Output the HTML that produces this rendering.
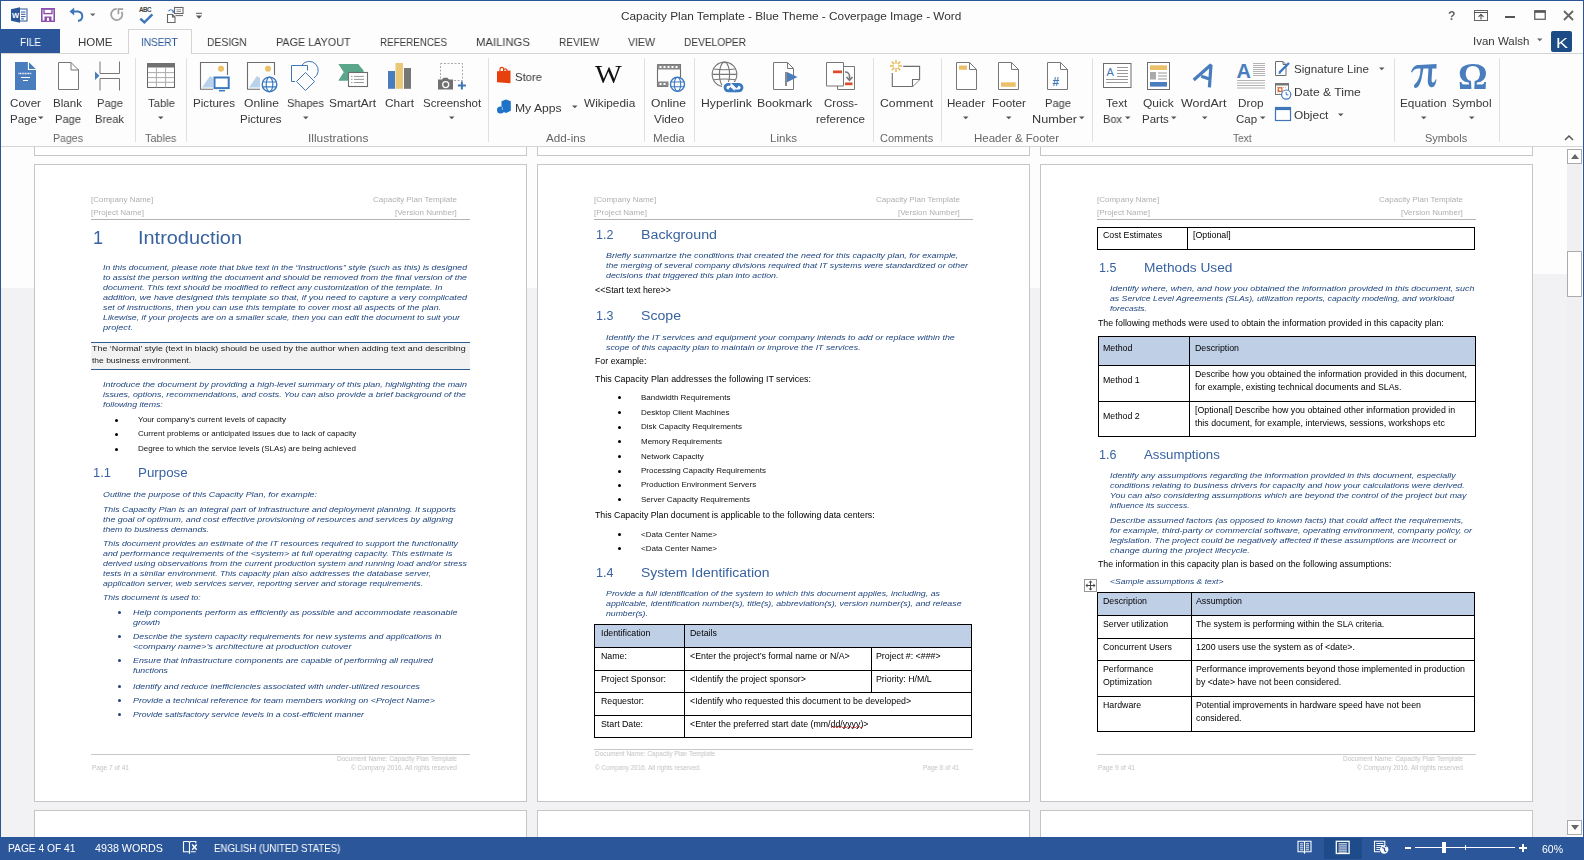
<!DOCTYPE html>
<html><head><meta charset="utf-8"><style>
html,body{margin:0;padding:0;}
body{width:1584px;height:860px;position:relative;overflow:hidden;background:#fcfdfc;font-family:'Liberation Sans', sans-serif;}
.t{position:absolute;white-space:pre;transform-origin:0 0;-webkit-font-smoothing:antialiased;will-change:transform;}
svg{position:absolute;overflow:visible;}
</style></head><body>
<div style="position:absolute;left:0px;top:0px;width:1584px;height:860px;background:#fcfdfc"></div><div style="position:absolute;left:1px;top:288px;width:1566px;height:549px;background:#f2f2f4"></div><div style="position:absolute;left:1533px;top:274px;width:34px;height:14px;background:#f2f2f4"></div><div style="position:absolute;left:0px;top:0px;width:1584px;height:1px;background:#2b579a"></div><div style="position:absolute;left:0px;top:0px;width:1px;height:860px;background:#2b579a"></div><div style="position:absolute;left:1583px;top:0px;width:1px;height:860px;background:#2b579a"></div><div style="position:absolute;left:1px;top:29px;width:59px;height:25px;background:#2b579a"></div><div style="position:absolute;left:1px;top:53px;width:1582px;height:1px;background:#d4d4d4"></div><div style="position:absolute;left:128px;top:29px;width:64px;height:25px;background:#fcfdfc;border:1px solid #d4d4d4;border-bottom:none;box-sizing:border-box"></div><div style="position:absolute;left:1px;top:146px;width:1582px;height:1px;background:#d4d4d4"></div><div style="position:absolute;left:0px;top:837px;width:1584px;height:23px;background:#2b579a"></div><div style="position:absolute;left:1324px;top:838px;width:38px;height:21px;background:#1e4b8a"></div><div style="position:absolute;left:34px;top:140px;width:493px;height:16px;background:#fff;border:1px solid #c6c6c6;border-top:none;box-sizing:border-box"></div><div style="position:absolute;left:34px;top:164px;width:493px;height:638px;background:#fff;border:1px solid #c6c6c6;box-sizing:border-box"></div><div style="position:absolute;left:34px;top:810px;width:493px;height:40px;background:#fff;border:1px solid #c6c6c6;border-bottom:none;box-sizing:border-box"></div><div style="position:absolute;left:537px;top:140px;width:493px;height:16px;background:#fff;border:1px solid #c6c6c6;border-top:none;box-sizing:border-box"></div><div style="position:absolute;left:537px;top:164px;width:493px;height:638px;background:#fff;border:1px solid #c6c6c6;box-sizing:border-box"></div><div style="position:absolute;left:537px;top:810px;width:493px;height:40px;background:#fff;border:1px solid #c6c6c6;border-bottom:none;box-sizing:border-box"></div><div style="position:absolute;left:1040px;top:140px;width:493px;height:16px;background:#fff;border:1px solid #c6c6c6;border-top:none;box-sizing:border-box"></div><div style="position:absolute;left:1040px;top:164px;width:493px;height:638px;background:#fff;border:1px solid #c6c6c6;box-sizing:border-box"></div><div style="position:absolute;left:1040px;top:810px;width:493px;height:40px;background:#fff;border:1px solid #c6c6c6;border-bottom:none;box-sizing:border-box"></div><div style="position:absolute;left:1px;top:54px;width:1582px;height:92px;background:#fcfdfc"></div><div style="position:absolute;left:1px;top:146px;width:1582px;height:1px;background:#d4d4d4"></div><div style="position:absolute;left:0px;top:837px;width:1584px;height:23px;background:#2b579a"></div><div style="position:absolute;left:1324px;top:838px;width:38px;height:21px;background:#1e4b8a"></div><div style="position:absolute;left:1567px;top:147px;width:16px;height:690px;background:#fcfdfc"></div><div style="position:absolute;left:1567px;top:164px;width:15px;height:657px;background:#f0f0f2"></div><div style="position:absolute;left:1567px;top:149px;width:15px;height:15px;background:#fff;border:1px solid #ababab;box-sizing:border-box"></div><div style="position:absolute;left:1567px;top:251px;width:15px;height:46px;background:#fff;border:1px solid #ababab;box-sizing:border-box"></div><div style="position:absolute;left:1567px;top:820px;width:15px;height:15px;background:#fff;border:1px solid #ababab;box-sizing:border-box"></div><svg style="left:1571px;top:154px" width="8" height="5"><path d="M0 5 L4 0 L8 5Z" fill="#666"/></svg><svg style="left:1571px;top:825px" width="8" height="5"><path d="M0 0 L4 5 L8 0Z" fill="#666"/></svg><div style="position:absolute;left:1583px;top:0px;width:1px;height:837px;background:#2b579a"></div><div style="position:absolute;left:0px;top:0px;width:1px;height:837px;background:#2b579a"></div><svg style="left:11px;top:7px" width="17" height="16" viewBox="0 0 17 16"><path d="M0 2.2 L9 0.3 V15.7 L0 13.8Z" fill="#2b579a"/><rect x="8.5" y="2" width="7.5" height="12" fill="#fff" stroke="#2b579a" stroke-width="1"/><path d="M10 5h4.5M10 7.3h4.5M10 9.6h4.5M10 11.9h3" stroke="#2b579a" stroke-width="1"/><text x="1" y="11" font-family="Liberation Sans" font-size="7.5" font-weight="bold" fill="#fff">W</text></svg><svg style="left:41px;top:8px" width="14" height="14" viewBox="0 0 14 14"><path d="M0.8 0.8h12.4v12.4H0.8z" fill="none" stroke="#8c4fb0" stroke-width="1.6"/><rect x="3" y="1" width="8" height="4.6" fill="none" stroke="#8c4fb0" stroke-width="1.4"/><rect x="3.5" y="8.5" width="7" height="4.5" fill="#8c4fb0"/><rect x="6" y="9.8" width="2" height="3.2" fill="#fff"/></svg><svg style="left:69px;top:7px" width="16" height="15" viewBox="0 0 16 15"><path d="M4 4.5 H9 A5 4.8 0 0 1 9 14" fill="none" stroke="#3f76b8" stroke-width="2"/><path d="M0.5 4.5 L5.2 0.6 V8.4Z" fill="#3f76b8"/></svg><svg style="left:89.5px;top:12.5px" width="6" height="4" viewBox="0 0 6 4"><path d="M0 0.5h5.5L2.75 3.3z" fill="#666"/></svg><svg style="left:109px;top:6px" width="16" height="17" viewBox="0 0 16 17"><path d="M7.7 2.9 A5.6 5.6 0 1 0 12.55 5.7" fill="none" stroke="#a0a0a0" stroke-width="1.7"/><path d="M9.4 8.2 V3.1 H14.2" fill="none" stroke="#a0a0a0" stroke-width="1.7"/></svg><svg style="left:138px;top:5px" width="16" height="19" viewBox="0 0 16 19"><text x="1" y="6.8" font-family="Liberation Sans" font-size="6.3" font-weight="bold" fill="#444" textLength="12.5">ABC</text><path d="M2.3 13.6 L6.4 17.4 L14.4 9.4" fill="none" stroke="#3f76b8" stroke-width="2.4"/></svg><svg style="left:166px;top:6px" width="18" height="18" viewBox="0 0 18 18"><path d="M1.5 8.5 H6.5 L9 11 V16.5 H1.5Z M6.5 8.5 V11 H9" fill="#fff" stroke="#666" stroke-width="1.1"/><rect x="8.5" y="1.5" width="8.5" height="6" fill="#fff" stroke="#666" stroke-width="1.1"/><path d="M10.5 3.8h4.5M10.5 5.5h4.5" stroke="#888" stroke-width="0.9"/><path d="M9.5 9.6h7.5" stroke="#666" stroke-width="1"/><path d="M2.5 5.2 Q4.8 2.3 7.3 5.3" fill="none" stroke="#3a78c0" stroke-width="1.2"/><path d="M5.8 6.3 L8.3 6.9 L8.1 4.2Z" fill="#3a78c0"/></svg><svg style="left:195px;top:12px" width="8" height="8" viewBox="0 0 8 8"><path d="M1 1.3h6" stroke="#555" stroke-width="1"/><path d="M1 3.5h6L4 6.7z" fill="#555"/></svg><svg style="left:1474px;top:10px" width="14" height="11" viewBox="0 0 14 11"><rect x="0.5" y="0.5" width="13" height="10" fill="none" stroke="#666" stroke-width="1"/><path d="M0.5 2.5h13" stroke="#555" stroke-width="1"/><path d="M7 9.5V4.5M4.5 6.8L7 4.3 9.5 6.8" fill="none" stroke="#555" stroke-width="1.1"/></svg><div style="position:absolute;left:1504.5px;top:16px;width:10px;height:2px;background:#555"></div><svg style="left:1534px;top:10px" width="12" height="10" viewBox="0 0 12 10"><rect x="0.75" y="0.75" width="10.5" height="8.5" fill="none" stroke="#555" stroke-width="1.2"/><path d="M0.5 1.8h11" stroke="#555" stroke-width="2"/></svg><svg style="left:1562.5px;top:9.5px" width="11" height="11" viewBox="0 0 11 11"><path d="M1 1L10 10M10 1L1 10" stroke="#666" stroke-width="1.8"/></svg><svg style="left:1537px;top:38.3px" width="6" height="4" viewBox="0 0 6 4"><path d="M0 0.5h5.5L2.75 3.3z" fill="#666"/></svg><div style="position:absolute;left:1551px;top:31px;width:21px;height:21px;background:#1d4b86;border-radius:2px"></div><svg style="left:1564px;top:134px" width="10" height="7" viewBox="0 0 10 7"><path d="M1 6 L5 2 L9 6" fill="none" stroke="#555" stroke-width="1.5"/></svg><svg style="left:15px;top:62px" width="22" height="28" viewBox="0 0 22 28"><path d="M0 0 H13.5 L21 7.5 V28 H0Z" fill="#4a7dbd"/><path d="M13.5 0 V7.5 H21" fill="none" stroke="#fff" stroke-width="1.2"/><path d="M14 0.5 L20.5 7 H14Z" fill="#4a7dbd"/><path d="M3.5 11.5h13" stroke="#fff" stroke-width="1.6" stroke-dasharray="1 0.6"/><path d="M6 15.5h9M8 18.5h5" stroke="#fff" stroke-width="1.2"/></svg><svg style="left:58px;top:62px" width="22" height="28" viewBox="0 0 22 28"><path d="M0.5 0.5 H13 L20.5 8 V27.5 H0.5Z M13 0.5 V8 H20.5" fill="#fff" stroke="#777" stroke-width="1"/></svg><svg style="left:94px;top:61px" width="27" height="30" viewBox="0 0 27 30"><path d="M6 0.5 V12.5 H25.5 V0.5 M6 29.5 V17.5 H25.5 V29.5" fill="none" stroke="#777" stroke-width="1"/><path d="M1 10.5 L5.5 14.8 L1 19z" fill="#4a7dbd"/></svg><svg style="left:37.5px;top:116px" width="6" height="4" viewBox="0 0 6 4"><path d="M0 0.5h5.5L2.75 3.3z" fill="#555"/></svg><div style="position:absolute;left:135px;top:58px;width:1px;height:84px;background:#e0e0e2"></div><svg style="left:147px;top:63px" width="28" height="25" viewBox="0 0 28 25"><rect x="0.5" y="0.5" width="27" height="24" fill="#fff" stroke="#666" stroke-width="1"/><rect x="0" y="0" width="28" height="4.5" fill="#707070"/><path d="M1 9.6h26M1 14.6h26M1 19.3h26M9.4 4.5v20M18.6 4.5v20" stroke="#aaa" stroke-width="1"/></svg><svg style="left:157.5px;top:116px" width="6" height="4" viewBox="0 0 6 4"><path d="M0 0.5h5.5L2.75 3.3z" fill="#555"/></svg><div style="position:absolute;left:186px;top:58px;width:1px;height:84px;background:#e0e0e2"></div><svg style="left:200px;top:62px" width="30" height="30" viewBox="0 0 30 30"><path d="M13 27.3 H0.5 V0.5 H27.5 V13" fill="none" stroke="#6d6d6d" stroke-width="1.1"/><circle cx="21" cy="6.8" r="3" fill="#ecc06a"/><path d="M2 25.5 L10 14 L13 16 V25.5Z" fill="#b8d2ec"/></svg><svg style="left:213px;top:76px" width="18" height="17" viewBox="0 0 18 17"><rect x="1.5" y="1.5" width="14.2" height="10.6" fill="#fff" stroke="#3a78c0" stroke-width="2"/><path d="M6 14.7h6" stroke="#3a78c0" stroke-width="1.5"/></svg><svg style="left:247px;top:62px" width="30" height="30" viewBox="0 0 30 30"><path d="M13 27.3 H0.5 V0.5 H27.5 V13" fill="none" stroke="#6d6d6d" stroke-width="1.1"/><circle cx="21" cy="6.8" r="3" fill="#ecc06a"/><path d="M2 25.5 L10 14 L13 16 V25.5Z" fill="#b8d2ec"/></svg><svg style="left:261px;top:76px" width="17" height="17" viewBox="0 0 17 17"><circle cx="8.5" cy="8.4" r="7.3" fill="#fff" stroke="#3a78c0" stroke-width="1.4"/><ellipse cx="8.5" cy="8.4" rx="3.3" ry="7.3" fill="none" stroke="#3a78c0" stroke-width="1.2"/><path d="M1.5 6h14M1.5 10.8h14" stroke="#3a78c0" stroke-width="1.2"/></svg><svg style="left:290px;top:60px" width="32" height="33" viewBox="0 0 32 33"><path d="M5 21.5 H1.5 V5.5 H17.5 V10.5" fill="none" stroke="#3f76b8" stroke-width="1"/><path d="M12 5 A9 9 0 1 1 24 18" fill="none" stroke="#3f76b8" stroke-width="1"/><path d="M15.5 12.5 L24.5 21.5 L15.5 30.5 L6.5 21.5Z" fill="none" stroke="#3f76b8" stroke-width="1"/></svg><svg style="left:338px;top:63px" width="31" height="25" viewBox="0 0 31 25"><path d="M0.5 1 H20 L25.5 7.5 V9 H10 L5.5 9.5 L0.5 17.5 H9.5 V17 L6 9.5Z" fill="#5aa68b"/><path d="M0.5 1 H20 L25.5 8 L20 17.5 H0.5 L6.5 9.2Z" fill="#5aa68b"/><rect x="10.5" y="9.5" width="19" height="14" fill="#fff" stroke="#6d6d6d" stroke-width="1.1"/><path d="M13 13.4h1.5M16 13.4h10M13 16.4h1.5M16 16.4h10M13 19.5h1.5M16 19.5h10" stroke="#999" stroke-width="1"/></svg><svg style="left:388px;top:63px" width="24" height="26" viewBox="0 0 24 26"><rect x="0" y="8" width="7" height="17.8" fill="#4a7dbd"/><rect x="7.5" y="0" width="7.5" height="25.8" fill="#eac878"/><rect x="16" y="5" width="7" height="20.8" fill="#767676"/></svg><svg style="left:437px;top:62px" width="30" height="29" viewBox="0 0 30 29"><rect x="3.5" y="1.5" width="22" height="17" fill="none" stroke="#aaa" stroke-width="1" stroke-dasharray="2 1.5"/><path d="M1 17.5 h4 l1.5 -1.7 h4 l1.5 1.7 h4 v10 h-15z" fill="#707070"/><circle cx="8.7" cy="22.6" r="3" fill="none" stroke="#fff" stroke-width="1.3"/><path d="M24.9 19.5v8M20.9 23.5h8" stroke="#3f76b8" stroke-width="2"/></svg><svg style="left:302.5px;top:116px" width="6" height="4" viewBox="0 0 6 4"><path d="M0 0.5h5.5L2.75 3.3z" fill="#555"/></svg><svg style="left:449px;top:116px" width="6" height="4" viewBox="0 0 6 4"><path d="M0 0.5h5.5L2.75 3.3z" fill="#555"/></svg><div style="position:absolute;left:488px;top:58px;width:1px;height:84px;background:#e0e0e2"></div><svg style="left:496px;top:67px" width="16" height="17" viewBox="0 0 16 17"><path d="M1 4.2 L14.5 3.6 V16.2 L1 15.2Z" fill="#e8400c"/><path d="M4 4.2 V2.2 A1.8 1.8 0 0 1 7.6 2.2 V4 M7.6 3 A1.8 1.8 0 0 1 11 3 V4" fill="none" stroke="#e8400c" stroke-width="1.2"/></svg><svg style="left:496px;top:99px" width="16" height="16" viewBox="0 0 16 16"><path d="M5.5 2.2 L10 0.5 L14.8 2.2 V11.8 L10 14 L5.5 12Z" fill="#1e72c8"/><circle cx="4.6" cy="11" r="3.6" fill="#1e72c8"/><path d="M6.3 8 v3" stroke="#fff" stroke-width="0.5"/></svg><svg style="left:571.5px;top:105.2px" width="6" height="4" viewBox="0 0 6 4"><path d="M0 0.5h5.5L2.75 3.3z" fill="#555"/></svg><div class="t" style="left:595px;top:62px;font-family:'Liberation Serif',serif;font-size:25px;line-height:25px;color:#111;transform:scaleX(1.13)">W</div><div style="position:absolute;left:643.5px;top:58px;width:1px;height:84px;background:#e0e0e2"></div><svg style="left:656px;top:63px" width="30" height="30" viewBox="0 0 30 30"><path d="M1.5 1.5 H24.5 V14 M12 23.5 H1.5 V1.5" fill="none" stroke="#6d6d6d" stroke-width="1.1"/><rect x="1.5" y="1.5" width="23" height="5" fill="#888"/><rect x="1.5" y="18.5" width="11" height="5" fill="#888"/><path d="M3.5 4h2M7.5 4h2M11.5 4h2M15.5 4h2M19.5 4h2M3.5 21h2M7.5 21h2" stroke="#fff" stroke-width="2"/><circle cx="21.5" cy="21.3" r="7" fill="#fff" stroke="#3a78c0" stroke-width="1.4"/><ellipse cx="21.5" cy="21.3" rx="3.2" ry="7" fill="none" stroke="#3a78c0" stroke-width="1.1"/><path d="M14.5 19h14M14.5 23.7h14" stroke="#3a78c0" stroke-width="1.1"/></svg><div style="position:absolute;left:694px;top:58px;width:1px;height:84px;background:#e0e0e2"></div><svg style="left:705px;top:58px" width="45" height="38" viewBox="0 0 45 38"><circle cx="19.5" cy="16.4" r="12.3" fill="none" stroke="#777" stroke-width="1.1"/><ellipse cx="19.5" cy="16.4" rx="5.1" ry="12.3" fill="none" stroke="#777" stroke-width="1.1"/><path d="M8.5 11 Q19.5 12.5 30.5 11 M7.2 16.4 H31.8 M8.5 21.8 Q19.5 20.3 30.5 21.8" fill="none" stroke="#777" stroke-width="1.1"/><path d="M17 27 L22 24 H38 V37 H17Z" fill="#fcfdfc"/><path d="M25.5 26.3 H23.3 A3.3 3.3 0 0 0 23.3 32.9 H27.5 L24.5 30" fill="none" stroke="#3a78c0" stroke-width="2.8"/><path d="M29.5 32.9 H33.7 A3.3 3.3 0 0 0 33.7 26.3 H29.5 L32.5 29.2" fill="none" stroke="#3a78c0" stroke-width="2.8"/></svg><svg style="left:772px;top:61px" width="27" height="30" viewBox="0 0 27 30"><path d="M1.5 1.5 H15.5 L21.5 7.5 V28.5 H1.5Z M15.5 1.5 V7.5 H21.5" fill="#fff" stroke="#777" stroke-width="1"/><path d="M14 11 V25" stroke="#666" stroke-width="1.5"/><path d="M15 11 L25.5 16 L15 21.3Z" fill="#4a7dbd"/></svg><svg style="left:825px;top:61px" width="32" height="30" viewBox="0 0 32 30"><path d="M12.5 5.5 H29.5 V28.5 H12.5Z" fill="#fff" stroke="#777" stroke-width="1"/><path d="M1.5 1.5 H18.5 V25 H1.5Z" fill="#fff" stroke="#777" stroke-width="1"/><rect x="8" y="9.5" width="9" height="2.7" fill="#dd4b2a"/><rect x="20" y="21.5" width="7.5" height="2.7" fill="#dd4b2a"/><path d="M20 11 A4 4 0 0 1 24.5 15 V18" fill="none" stroke="#777" stroke-width="1.6"/><path d="M21.5 16 L24.5 19.3 L27.5 16" fill="none" stroke="#777" stroke-width="1.6"/></svg><div style="position:absolute;left:872.5px;top:58px;width:1px;height:84px;background:#e0e0e2"></div><svg style="left:885px;top:58px" width="40" height="34" viewBox="0 0 40 34"><path d="M7.3 15 V28.5 H27.5 L34.6 21.5 V8.4 H18.2" fill="#fff" stroke="#6d6d6d" stroke-width="1.1"/><path d="M27.5 28.5 V21.5 H34.6" fill="#fff" stroke="#6d6d6d" stroke-width="1.1"/><g stroke="#ecc06a" stroke-width="1.7"><path d="M11 1.9v12M5 7.9h12M6.8 3.7l8.4 8.4M15.2 3.7l-8.4 8.4"/></g><circle cx="11" cy="7.9" r="2.4" fill="#fff"/></svg><div style="position:absolute;left:940.5px;top:58px;width:1px;height:84px;background:#e0e0e2"></div><svg style="left:956px;top:62px" width="22" height="28" viewBox="0 0 22 28"><path d="M0.5 0.5 H13.5 L20.5 7.5 V27.5 H0.5Z M13.5 0.5 V7.5 H20.5" fill="#fff" stroke="#777" stroke-width="1"/><rect x="3" y="3.5" width="8" height="4.3" fill="#ecc06a"/></svg><svg style="left:998px;top:62px" width="22" height="28" viewBox="0 0 22 28"><path d="M0.5 0.5 H13.5 L20.5 7.5 V27.5 H0.5Z M13.5 0.5 V7.5 H20.5" fill="#fff" stroke="#777" stroke-width="1"/><rect x="3" y="20.3" width="14.7" height="4.5" fill="#ecc06a"/></svg><svg style="left:1047px;top:62px" width="22" height="28" viewBox="0 0 22 28"><path d="M0.5 0.5 H13.5 L20.5 7.5 V27.5 H0.5Z M13.5 0.5 V7.5 H20.5" fill="#fff" stroke="#777" stroke-width="1"/><text x="5.2" y="23.5" font-family="Liberation Sans" font-size="12" font-weight="bold" font-style="italic" fill="#3f76b8">#</text></svg><svg style="left:963px;top:116px" width="6" height="4" viewBox="0 0 6 4"><path d="M0 0.5h5.5L2.75 3.3z" fill="#555"/></svg><svg style="left:1005.5px;top:116px" width="6" height="4" viewBox="0 0 6 4"><path d="M0 0.5h5.5L2.75 3.3z" fill="#555"/></svg><svg style="left:1078.5px;top:116px" width="6" height="4" viewBox="0 0 6 4"><path d="M0 0.5h5.5L2.75 3.3z" fill="#555"/></svg><div style="position:absolute;left:1091.5px;top:58px;width:1px;height:84px;background:#e0e0e2"></div><svg style="left:1103px;top:63px" width="29" height="25" viewBox="0 0 29 25"><rect x="0.5" y="0.5" width="27.5" height="24" fill="#fff" stroke="#6d6d6d" stroke-width="1"/><text x="3.5" y="12.5" font-family="Liberation Sans" font-size="11" fill="#3f76b8">A</text><path d="M14 4.5h11M14 7.5h11M14 10.5h11M14 13.5h11M3 16.5h22M3 19.5h22" stroke="#999" stroke-width="1"/></svg><svg style="left:1147px;top:62px" width="23" height="28" viewBox="0 0 23 28"><rect x="0.5" y="0.5" width="22" height="27" fill="#fff" stroke="#6d6d6d" stroke-width="1"/><rect x="3" y="3.3" width="17" height="4.7" fill="#ecc06a"/><rect x="3" y="10" width="6" height="7.5" fill="#aaa"/><path d="M11 11h9M11 14h9M11 17h9" stroke="#999" stroke-width="1"/><rect x="3" y="20" width="17" height="4.6" fill="#4a7dbd"/></svg><svg style="left:1185px;top:58px" width="35" height="35" viewBox="0 0 35 35"><path d="M8.7 22 L26 6.8 L24.4 29.3 M16.3 18.3 L25.2 21.2" fill="none" stroke="#4a7dbd" stroke-width="3.2" stroke-linejoin="bevel"/></svg><svg style="left:1237px;top:62px" width="29" height="28" viewBox="0 0 29 28"><text x="-0.5" y="15.8" font-family="Liberation Sans" font-size="20" font-weight="bold" fill="#4a7dbd">A</text><path d="M16 1.5h12M16 3.5h12M16 5.5h12M16 7.5h12M16 9.5h12M16 11.5h12M16 13.5h12M0 18.5h28M0 21h28M0 23.5h28M0 26h28" stroke="#aaa" stroke-width="0.9"/></svg><svg style="left:1124.5px;top:116px" width="6" height="4" viewBox="0 0 6 4"><path d="M0 0.5h5.5L2.75 3.3z" fill="#555"/></svg><svg style="left:1170.5px;top:116px" width="6" height="4" viewBox="0 0 6 4"><path d="M0 0.5h5.5L2.75 3.3z" fill="#555"/></svg><svg style="left:1201.5px;top:116px" width="6" height="4" viewBox="0 0 6 4"><path d="M0 0.5h5.5L2.75 3.3z" fill="#555"/></svg><svg style="left:1259.5px;top:116px" width="6" height="4" viewBox="0 0 6 4"><path d="M0 0.5h5.5L2.75 3.3z" fill="#555"/></svg><svg style="left:1274px;top:60px" width="18" height="17" viewBox="0 0 18 17"><path d="M1.5 1.5 H9 L12 4.5 V15.5 H1.5Z M9 1.5 V4.5 H12" fill="#fff" stroke="#6d6d6d" stroke-width="1"/><path d="M5.5 12.5 L15 3" stroke="#3a78c0" stroke-width="2.4"/><path d="M4.5 14 L5 11.5 L7 13.5Z" fill="#3a78c0"/></svg><svg style="left:1378.5px;top:66.7px" width="6" height="4" viewBox="0 0 6 4"><path d="M0 0.5h5.5L2.75 3.3z" fill="#555"/></svg><svg style="left:1274px;top:82px" width="18" height="18" viewBox="0 0 18 18"><rect x="1.5" y="1.5" width="13" height="11" fill="#fff" stroke="#777" stroke-width="1"/><path d="M1.5 2.5h13" stroke="#777" stroke-width="2"/><path d="M3 5.5h10M3 8.5h3M3 11h3" stroke="#bbb" stroke-width="0.9" stroke-dasharray="1 1"/><rect x="4.3" y="5.8" width="3.6" height="3.6" fill="none" stroke="#e8601c" stroke-width="1.2"/><circle cx="12.2" cy="12.6" r="4.6" fill="#fff" stroke="#3a78c0" stroke-width="1.2"/><path d="M12.2 10v2.8h2.2" fill="none" stroke="#3a78c0" stroke-width="1"/></svg><svg style="left:1274px;top:106px" width="18" height="16" viewBox="0 0 18 16"><rect x="1.5" y="1.5" width="15" height="13" fill="#fff" stroke="#3f76b8" stroke-width="1.2"/><path d="M1.5 2.8h15" stroke="#3f76b8" stroke-width="2.6"/></svg><svg style="left:1338px;top:112.7px" width="6" height="4" viewBox="0 0 6 4"><path d="M0 0.5h5.5L2.75 3.3z" fill="#555"/></svg><div style="position:absolute;left:1393.5px;top:58px;width:1px;height:84px;background:#e0e0e2"></div><svg style="left:1409px;top:62px" width="30" height="28" viewBox="0 0 30 28"><path d="M2 10 C3.5 5.5 6 3 9.5 3 L27.5 2 L27.5 6.5 L9.5 6.5 C6.5 6.5 4.5 8 3 10.5Z" fill="#4a7dbd"/><path d="M11.5 6 C11.5 14 9.5 18.5 6 22 C4 24.5 5 26.5 7.5 25.8 C10 25 12 20 13 14 L14.5 6Z" fill="#4a7dbd"/><path d="M19.5 6 L18.8 18 C18.5 24.5 22 26.5 24.8 24.5 C26.5 23 27 20.5 27.5 17.5 L26.5 17.5 C26 19.5 25 20.8 23.6 20.5 C22.3 20.2 22.6 17 22.8 14 L23.3 6Z" fill="#4a7dbd"/></svg><div class="t" style="left:1458px;top:58px;font-family:'Liberation Serif',serif;font-size:37px;line-height:37px;font-weight:bold;color:#4a7dbd">Ω</div><svg style="left:1420.5px;top:116px" width="6" height="4" viewBox="0 0 6 4"><path d="M0 0.5h5.5L2.75 3.3z" fill="#555"/></svg><svg style="left:1469px;top:116px" width="6" height="4" viewBox="0 0 6 4"><path d="M0 0.5h5.5L2.75 3.3z" fill="#555"/></svg><div style="position:absolute;left:1499px;top:58px;width:1px;height:84px;background:#e0e0e2"></div><svg style="left:182px;top:840px" width="17" height="16" viewBox="0 0 17 16"><path d="M1.5 1.5 H6.5 L7.5 2.5 L8.5 1.5 H13.8 V3.2 M1.5 1.5 V11.7 H6.5 L7.5 12.7 M7.5 2.5 V13.8 M8.7 11.7 H13.8" fill="none" stroke="#fff" stroke-width="1.1"/><path d="M10.2 4.5 L14.7 9.7 M14.7 4.5 L10.2 9.7" stroke="#fff" stroke-width="1.5"/></svg><svg style="left:1297px;top:840px" width="16" height="16" viewBox="0 0 16 16"><path d="M1 1.3 H6.8 L7.5 2 L8.2 1.3 H14 V11.8 H8.2 L7.5 12.8 L6.8 11.8 H1Z" fill="none" stroke="#fff" stroke-width="1.1"/><path d="M7.5 2 V13.5" stroke="#fff" stroke-width="1"/><path d="M3 3.8h3.2M3 5.8h3.2M3 7.8h3.2M3 9.8h3.2M8.8 3.8h3.2M8.8 5.8h3.2M8.8 7.8h3.2M8.8 9.8h3.2" stroke="#fff" stroke-width="0.9"/></svg><svg style="left:1335px;top:840px" width="16" height="15" viewBox="0 0 16 15"><rect x="1.3" y="1.3" width="12.8" height="12.2" fill="none" stroke="#fff" stroke-width="1.3"/><path d="M3.5 3.8h8.4M3.5 5.9h8.4M3.5 8h8.4M3.5 10.1h8.4M3.5 12.1h8.4" stroke="#fff" stroke-width="1"/></svg><svg style="left:1373px;top:840px" width="17" height="16" viewBox="0 0 17 16"><path d="M11.8 6 V1.3 H1.5 V11.8 H7" fill="none" stroke="#fff" stroke-width="1.1"/><path d="M3.3 3.5h7M3.3 5.5h7M3.3 7.5h4M3.3 9.5h3.5" stroke="#fff" stroke-width="0.9"/><circle cx="11.2" cy="9.5" r="4.2" fill="#fff"/><path d="M9 7.5 l2.5 1 v2 l1.5 1.5 M12 6 l1.5 1" stroke="#2b579a" stroke-width="1.2" fill="none"/></svg><div style="position:absolute;left:1405px;top:847px;width:6px;height:2px;background:#fff"></div><div style="position:absolute;left:1415px;top:847px;width:100px;height:1px;background:#fff"></div><div style="position:absolute;left:1442px;top:842px;width:4px;height:11px;background:#fff"></div><div style="position:absolute;left:1465px;top:845px;width:1px;height:5px;background:#fff"></div><div style="position:absolute;left:1519px;top:847px;width:8px;height:2px;background:#fff"></div><div style="position:absolute;left:1522px;top:844px;width:2px;height:8px;background:#fff"></div><div style="position:absolute;left:91px;top:219px;width:379px;height:1px;background:#b4b4b8"></div><div style="position:absolute;left:594px;top:219px;width:379px;height:1px;background:#b4b4b8"></div><div style="position:absolute;left:1097px;top:219px;width:379px;height:1px;background:#b4b4b8"></div><div style="position:absolute;left:91px;top:342px;width:379px;height:28px;background:#f2f2f2;border-top:1px solid #2e5c94;border-bottom:1px solid #2e5c94;box-sizing:border-box"></div><div style="position:absolute;left:115.3px;top:418.9px;width:3.1px;height:3.1px;background:#000;border-radius:50%"></div><div style="position:absolute;left:115.3px;top:432.7px;width:3.1px;height:3.1px;background:#000;border-radius:50%"></div><div style="position:absolute;left:115.3px;top:447.9px;width:3.1px;height:3.1px;background:#000;border-radius:50%"></div><div style="position:absolute;left:118.3px;top:610.9000000000001px;width:3.1px;height:3.1px;background:#1d447e;border-radius:50%"></div><div style="position:absolute;left:118.3px;top:635.4000000000001px;width:3.1px;height:3.1px;background:#1d447e;border-radius:50%"></div><div style="position:absolute;left:118.3px;top:659.4000000000001px;width:3.1px;height:3.1px;background:#1d447e;border-radius:50%"></div><div style="position:absolute;left:118.3px;top:684.7px;width:3.1px;height:3.1px;background:#1d447e;border-radius:50%"></div><div style="position:absolute;left:118.3px;top:699.2px;width:3.1px;height:3.1px;background:#1d447e;border-radius:50%"></div><div style="position:absolute;left:118.3px;top:713.2px;width:3.1px;height:3.1px;background:#1d447e;border-radius:50%"></div><div style="position:absolute;left:91px;top:754px;width:379px;height:1px;background:#c8c8c8"></div><div style="position:absolute;left:1097px;top:754px;width:379px;height:1px;background:#c8c8c8"></div><div style="position:absolute;left:618.3px;top:396.2px;width:3.1px;height:3.1px;background:#000;border-radius:50%"></div><div style="position:absolute;left:618.3px;top:411.2px;width:3.1px;height:3.1px;background:#000;border-radius:50%"></div><div style="position:absolute;left:618.3px;top:425.5px;width:3.1px;height:3.1px;background:#000;border-radius:50%"></div><div style="position:absolute;left:618.3px;top:440.3px;width:3.1px;height:3.1px;background:#000;border-radius:50%"></div><div style="position:absolute;left:618.3px;top:455.3px;width:3.1px;height:3.1px;background:#000;border-radius:50%"></div><div style="position:absolute;left:618.3px;top:469.5px;width:3.1px;height:3.1px;background:#000;border-radius:50%"></div><div style="position:absolute;left:618.3px;top:484.09999999999997px;width:3.1px;height:3.1px;background:#000;border-radius:50%"></div><div style="position:absolute;left:618.3px;top:498.3px;width:3.1px;height:3.1px;background:#000;border-radius:50%"></div><div style="position:absolute;left:618.3px;top:533.3000000000001px;width:3.1px;height:3.1px;background:#000;border-radius:50%"></div><div style="position:absolute;left:618.3px;top:547.2px;width:3.1px;height:3.1px;background:#000;border-radius:50%"></div><div style="position:absolute;left:594px;top:624px;width:378px;height:114px;background:#fff;border:1px solid #000;box-sizing:border-box"></div><div style="position:absolute;left:595px;top:625px;width:376px;height:22px;background:#bfcfe6"></div><div style="position:absolute;left:594px;top:647px;width:378px;height:1px;background:#000"></div><div style="position:absolute;left:594px;top:670px;width:378px;height:1px;background:#000"></div><div style="position:absolute;left:594px;top:692px;width:378px;height:1px;background:#000"></div><div style="position:absolute;left:594px;top:715px;width:378px;height:1px;background:#000"></div><div style="position:absolute;left:684px;top:624px;width:1px;height:114px;background:#000"></div><div style="position:absolute;left:871px;top:647px;width:1px;height:45px;background:#000"></div><svg style="left:831px;top:726px" width="32" height="3"><path d="M0 2 L1.5 0.5 L3 2 L4.5 0.5 L6 2 L7.5 0.5 L9 2 L10.5 0.5 L12 2 L13.5 0.5 L15 2 L16.5 0.5 L18 2 L19.5 0.5 L21 2 L22.5 0.5 L24 2 L25.5 0.5 L27 2 L28.5 0.5 L30 2 L31.5 0.5" fill="none" stroke="#e02020" stroke-width="0.8"/></svg><div style="position:absolute;left:594px;top:749px;width:379px;height:1px;background:#c8c8c8"></div><div style="position:absolute;left:1097px;top:227px;width:378px;height:23px;background:#fff;border:1px solid #000;box-sizing:border-box"></div><div style="position:absolute;left:1187px;top:227px;width:1px;height:23px;background:#000"></div><div style="position:absolute;left:1098px;top:336px;width:378px;height:101px;background:#fff;border:1px solid #000;box-sizing:border-box"></div><div style="position:absolute;left:1099px;top:337px;width:376px;height:28px;background:#bfcfe6"></div><div style="position:absolute;left:1098px;top:365px;width:378px;height:1px;background:#000"></div><div style="position:absolute;left:1098px;top:401px;width:378px;height:1px;background:#000"></div><div style="position:absolute;left:1189px;top:336px;width:1px;height:101px;background:#000"></div><div style="position:absolute;left:1084px;top:579px;width:13px;height:13px;background:#fff;border:1px solid #999;box-sizing:border-box"></div><svg style="left:1085px;top:580px" width="11" height="11"><path d="M5.5 1.5v8M1.5 5.5h8" stroke="#444" stroke-width="1"/><path d="M5.5 0.5l-2 2h4zM5.5 10.5l-2-2h4zM0.5 5.5l2-2v4zM10.5 5.5l-2-2v4z" fill="#444"/></svg><div style="position:absolute;left:1097px;top:592px;width:378px;height:140px;background:#fff;border:1px solid #000;box-sizing:border-box"></div><div style="position:absolute;left:1098px;top:593px;width:376px;height:22px;background:#bfcfe6"></div><div style="position:absolute;left:1097px;top:615px;width:378px;height:1px;background:#000"></div><div style="position:absolute;left:1097px;top:638px;width:378px;height:1px;background:#000"></div><div style="position:absolute;left:1097px;top:660px;width:378px;height:1px;background:#000"></div><div style="position:absolute;left:1097px;top:696px;width:378px;height:1px;background:#000"></div><div style="position:absolute;left:1191px;top:592px;width:1px;height:140px;background:#000"></div>
<div class="t" style="left:620.50px;top:10.71px;font-size:11.8px;line-height:11.8px;color:#333;">Capacity Plan Template - Blue Theme - Coverpage Image - Word</div><div class="t" style="left:20.00px;top:37.07px;font-size:11.5px;line-height:11.5px;color:#fff;transform:scaleX(0.8643);">FILE</div><div class="t" style="left:77.50px;top:37.07px;font-size:11.5px;line-height:11.5px;color:#3a3a3a;">HOME</div><div class="t" style="left:141.00px;top:37.07px;font-size:11.5px;line-height:11.5px;color:#2b579a;transform:scaleX(0.8697);">INSERT</div><div class="t" style="left:207.00px;top:37.07px;font-size:11.5px;line-height:11.5px;color:#3a3a3a;transform:scaleX(0.9004);">DESIGN</div><div class="t" style="left:276.00px;top:37.07px;font-size:11.5px;line-height:11.5px;color:#3a3a3a;transform:scaleX(0.9375);">PAGE LAYOUT</div><div class="t" style="left:380.00px;top:37.07px;font-size:11.5px;line-height:11.5px;color:#3a3a3a;transform:scaleX(0.8523);">REFERENCES</div><div class="t" style="left:476.00px;top:37.07px;font-size:11.5px;line-height:11.5px;color:#3a3a3a;transform:scaleX(0.9824);">MAILINGS</div><div class="t" style="left:559.00px;top:37.07px;font-size:11.5px;line-height:11.5px;color:#3a3a3a;transform:scaleX(0.8815);">REVIEW</div><div class="t" style="left:628.00px;top:37.07px;font-size:11.5px;line-height:11.5px;color:#3a3a3a;transform:scaleX(0.9187);">VIEW</div><div class="t" style="left:684.00px;top:37.07px;font-size:11.5px;line-height:11.5px;color:#3a3a3a;transform:scaleX(0.8818);">DEVELOPER</div><div class="t" style="left:8.30px;top:844.17px;font-size:10.2px;line-height:10.2px;color:#fff;transform:scaleX(1.0044);">PAGE 4 OF 41</div><div class="t" style="left:94.70px;top:844.17px;font-size:10.2px;line-height:10.2px;color:#fff;transform:scaleX(1.0535);">4938 WORDS</div><div class="t" style="left:214.00px;top:844.17px;font-size:10.2px;line-height:10.2px;color:#fff;transform:scaleX(0.9489);">ENGLISH (UNITED STATES)</div><div class="t" style="left:1542.00px;top:843.91px;font-size:10.5px;line-height:10.5px;color:#fff;">60%</div><div class="t" style="left:1448.00px;top:10.14px;font-size:12px;line-height:12px;color:#666;font-weight:bold;transform:scaleX(1.0213);">?</div><div class="t" style="left:1473.00px;top:36.07px;font-size:11.5px;line-height:11.5px;color:#383838;">Ivan Walsh</div><div class="t" style="left:1555.50px;top:34.80px;font-size:15px;line-height:15px;color:#fff;transform:scaleX(1.1981);">K</div><div class="t" style="left:10.00px;top:97.97px;font-size:11.5px;line-height:11.5px;color:#383838;transform:scaleX(1.0102);">Cover</div><div class="t" style="left:10.00px;top:113.57px;font-size:11.5px;line-height:11.5px;color:#383838;transform:scaleX(0.9866);">Page</div><div class="t" style="left:53.00px;top:97.97px;font-size:11.5px;line-height:11.5px;color:#383838;transform:scaleX(1.0076);">Blank</div><div class="t" style="left:55.00px;top:113.57px;font-size:11.5px;line-height:11.5px;color:#383838;transform:scaleX(0.9680);">Page</div><div class="t" style="left:97.00px;top:97.97px;font-size:11.5px;line-height:11.5px;color:#383838;transform:scaleX(0.9680);">Page</div><div class="t" style="left:95.00px;top:113.57px;font-size:11.5px;line-height:11.5px;color:#383838;transform:scaleX(0.9652);">Break</div><div class="t" style="left:53.00px;top:132.79px;font-size:11px;line-height:11px;color:#666;transform:scaleX(0.9614);">Pages</div><div class="t" style="left:148.00px;top:97.97px;font-size:11.5px;line-height:11.5px;color:#383838;transform:scaleX(0.9818);">Table</div><div class="t" style="left:144.70px;top:132.79px;font-size:11px;line-height:11px;color:#666;transform:scaleX(0.9844);">Tables</div><div class="t" style="left:193.00px;top:97.97px;font-size:11.5px;line-height:11.5px;color:#383838;transform:scaleX(1.0109);">Pictures</div><div class="t" style="left:244.00px;top:97.97px;font-size:11.5px;line-height:11.5px;color:#383838;transform:scaleX(1.0526);">Online</div><div class="t" style="left:240.00px;top:113.57px;font-size:11.5px;line-height:11.5px;color:#383838;">Pictures</div><div class="t" style="left:287.00px;top:97.97px;font-size:11.5px;line-height:11.5px;color:#383838;transform:scaleX(0.9483);">Shapes</div><div class="t" style="left:329.00px;top:97.97px;font-size:11.5px;line-height:11.5px;color:#383838;transform:scaleX(1.0358);">SmartArt</div><div class="t" style="left:385.00px;top:97.97px;font-size:11.5px;line-height:11.5px;color:#383838;transform:scaleX(1.0311);">Chart</div><div class="t" style="left:423.00px;top:97.97px;font-size:11.5px;line-height:11.5px;color:#383838;transform:scaleX(0.9968);">Screenshot</div><div class="t" style="left:307.60px;top:132.79px;font-size:11px;line-height:11px;color:#666;transform:scaleX(1.0855);">Illustrations</div><div class="t" style="left:515.00px;top:71.87px;font-size:11.5px;line-height:11.5px;color:#383838;transform:scaleX(0.9818);">Store</div><div class="t" style="left:515.00px;top:102.87px;font-size:11.5px;line-height:11.5px;color:#383838;transform:scaleX(1.0565);">My Apps</div><div class="t" style="left:584.20px;top:97.97px;font-size:11.5px;line-height:11.5px;color:#383838;transform:scaleX(1.0269);">Wikipedia</div><div class="t" style="left:546.00px;top:132.79px;font-size:11px;line-height:11px;color:#666;transform:scaleX(1.0618);">Add-ins</div><div class="t" style="left:651.00px;top:97.97px;font-size:11.5px;line-height:11.5px;color:#383838;transform:scaleX(1.0526);">Online</div><div class="t" style="left:654.00px;top:113.57px;font-size:11.5px;line-height:11.5px;color:#383838;transform:scaleX(1.0267);">Video</div><div class="t" style="left:653.00px;top:132.79px;font-size:11px;line-height:11px;color:#666;transform:scaleX(1.0611);">Media</div><div class="t" style="left:701.00px;top:97.97px;font-size:11.5px;line-height:11.5px;color:#383838;transform:scaleX(1.0597);">Hyperlink</div><div class="t" style="left:756.80px;top:97.97px;font-size:11.5px;line-height:11.5px;color:#383838;transform:scaleX(1.0660);">Bookmark</div><div class="t" style="left:824.00px;top:97.97px;font-size:11.5px;line-height:11.5px;color:#383838;transform:scaleX(0.9919);">Cross-</div><div class="t" style="left:816.00px;top:113.57px;font-size:11.5px;line-height:11.5px;color:#383838;transform:scaleX(1.0084);">reference</div><div class="t" style="left:770.00px;top:132.79px;font-size:11px;line-height:11px;color:#666;transform:scaleX(1.0511);">Links</div><div class="t" style="left:879.50px;top:97.97px;font-size:11.5px;line-height:11.5px;color:#383838;transform:scaleX(1.0650);">Comment</div><div class="t" style="left:879.50px;top:132.79px;font-size:11px;line-height:11px;color:#666;">Comments</div><div class="t" style="left:947.00px;top:97.97px;font-size:11.5px;line-height:11.5px;color:#383838;transform:scaleX(1.0075);">Header</div><div class="t" style="left:992.00px;top:97.97px;font-size:11.5px;line-height:11.5px;color:#383838;transform:scaleX(1.0226);">Footer</div><div class="t" style="left:1045.00px;top:97.97px;font-size:11.5px;line-height:11.5px;color:#383838;transform:scaleX(0.9680);">Page</div><div class="t" style="left:1032.00px;top:113.57px;font-size:11.5px;line-height:11.5px;color:#383838;transform:scaleX(1.1001);">Number</div><div class="t" style="left:973.70px;top:132.79px;font-size:11px;line-height:11px;color:#666;transform:scaleX(1.0464);">Header &amp; Footer</div><div class="t" style="left:1106.00px;top:97.97px;font-size:11.5px;line-height:11.5px;color:#383838;transform:scaleX(0.9956);">Text</div><div class="t" style="left:1103.00px;top:113.57px;font-size:11.5px;line-height:11.5px;color:#383838;transform:scaleX(0.9582);">Box</div><div class="t" style="left:1143.00px;top:97.97px;font-size:11.5px;line-height:11.5px;color:#383838;transform:scaleX(1.0440);">Quick</div><div class="t" style="left:1142.00px;top:113.57px;font-size:11.5px;line-height:11.5px;color:#383838;transform:scaleX(0.9872);">Parts</div><div class="t" style="left:1181.00px;top:97.97px;font-size:11.5px;line-height:11.5px;color:#383838;transform:scaleX(1.0818);">WordArt</div><div class="t" style="left:1238.00px;top:97.97px;font-size:11.5px;line-height:11.5px;color:#383838;transform:scaleX(1.0226);">Drop</div><div class="t" style="left:1236.00px;top:113.57px;font-size:11.5px;line-height:11.5px;color:#383838;transform:scaleX(0.9948);">Cap</div><div class="t" style="left:1294.00px;top:64.07px;font-size:11.5px;line-height:11.5px;color:#383838;transform:scaleX(1.0112);">Signature Line</div><div class="t" style="left:1294.00px;top:87.07px;font-size:11.5px;line-height:11.5px;color:#383838;transform:scaleX(1.0556);">Date &amp; Time</div><div class="t" style="left:1294.00px;top:110.27px;font-size:11.5px;line-height:11.5px;color:#383838;transform:scaleX(1.0346);">Object</div><div class="t" style="left:1233.00px;top:132.79px;font-size:11px;line-height:11px;color:#666;transform:scaleX(0.9263);">Text</div><div class="t" style="left:1400.00px;top:97.97px;font-size:11.5px;line-height:11.5px;color:#383838;transform:scaleX(1.0263);">Equation</div><div class="t" style="left:1452.00px;top:97.97px;font-size:11.5px;line-height:11.5px;color:#383838;transform:scaleX(1.0323);">Symbol</div><div class="t" style="left:1425.00px;top:132.79px;font-size:11px;line-height:11px;color:#666;transform:scaleX(0.9908);">Symbols</div><div class="t" style="left:91.40px;top:196.03px;font-size:8px;line-height:8px;color:#b0b0b0;">[Company Name]</div><div class="t" style="left:373.09px;top:196.03px;font-size:8px;line-height:8px;color:#b0b0b0;">Capacity Plan Template</div><div class="t" style="left:91.40px;top:208.83px;font-size:8px;line-height:8px;color:#b0b0b0;">[Project Name]</div><div class="t" style="left:395.19px;top:208.83px;font-size:8px;line-height:8px;color:#b0b0b0;">[Version Number]</div><div class="t" style="left:594.40px;top:196.03px;font-size:8px;line-height:8px;color:#b0b0b0;">[Company Name]</div><div class="t" style="left:876.09px;top:196.03px;font-size:8px;line-height:8px;color:#b0b0b0;">Capacity Plan Template</div><div class="t" style="left:594.40px;top:208.83px;font-size:8px;line-height:8px;color:#b0b0b0;">[Project Name]</div><div class="t" style="left:898.19px;top:208.83px;font-size:8px;line-height:8px;color:#b0b0b0;">[Version Number]</div><div class="t" style="left:1097.40px;top:196.03px;font-size:8px;line-height:8px;color:#b0b0b0;">[Company Name]</div><div class="t" style="left:1379.09px;top:196.03px;font-size:8px;line-height:8px;color:#b0b0b0;">Capacity Plan Template</div><div class="t" style="left:1097.40px;top:208.83px;font-size:8px;line-height:8px;color:#b0b0b0;">[Project Name]</div><div class="t" style="left:1401.19px;top:208.83px;font-size:8px;line-height:8px;color:#b0b0b0;">[Version Number]</div><div class="t" style="left:93.00px;top:228.66px;font-size:18px;line-height:18px;color:#3862a0;">1</div><div class="t" style="left:137.60px;top:228.66px;font-size:18px;line-height:18px;color:#3862a0;transform:scaleX(1.1056);">Introduction</div><div class="t" style="left:103.00px;top:263.83px;font-size:8px;line-height:8px;color:#1d447e;font-style:italic;transform:scaleX(1.0900);">In this document, please note that blue text in the “Instructions” style (such as this) is designed</div><div class="t" style="left:103.00px;top:273.83px;font-size:8px;line-height:8px;color:#1d447e;font-style:italic;transform:scaleX(1.1031);">to assist the person writing the document and should be removed from the final version of the</div><div class="t" style="left:103.00px;top:283.83px;font-size:8px;line-height:8px;color:#1d447e;font-style:italic;transform:scaleX(1.1142);">document. This text should be modified to reflect any customization of the template. In</div><div class="t" style="left:103.00px;top:293.83px;font-size:8px;line-height:8px;color:#1d447e;font-style:italic;transform:scaleX(1.1336);">addition, we have designed this template so that, if you need to capture a very complicated</div><div class="t" style="left:103.00px;top:303.83px;font-size:8px;line-height:8px;color:#1d447e;font-style:italic;transform:scaleX(1.1000);">set of instructions, then you can use this template to cover most all aspects of the plan.</div><div class="t" style="left:103.00px;top:313.83px;font-size:8px;line-height:8px;color:#1d447e;font-style:italic;transform:scaleX(1.0983);">Likewise, if your projects are on a smaller scale, then you can edit the document to suit your</div><div class="t" style="left:103.00px;top:323.83px;font-size:8px;line-height:8px;color:#1d447e;font-style:italic;transform:scaleX(1.1435);">project.</div><div class="t" style="left:92.00px;top:344.73px;font-size:8px;line-height:8px;color:#222;transform:scaleX(1.1126);">The ‘Normal’ style (text in black) should be used by the author when adding text and describing</div><div class="t" style="left:92.00px;top:357.03px;font-size:8px;line-height:8px;color:#222;transform:scaleX(1.0601);">the business environment.</div><div class="t" style="left:103.00px;top:380.83px;font-size:8px;line-height:8px;color:#1d447e;font-style:italic;transform:scaleX(1.1152);">Introduce the document by providing a high-level summary of this plan, highlighting the main</div><div class="t" style="left:103.00px;top:390.83px;font-size:8px;line-height:8px;color:#1d447e;font-style:italic;transform:scaleX(1.1036);">issues, options, recommendations, and costs. You can also provide a brief background of the</div><div class="t" style="left:103.00px;top:400.83px;font-size:8px;line-height:8px;color:#1d447e;font-style:italic;transform:scaleX(1.0935);">following items:</div><div class="t" style="left:137.60px;top:416.23px;font-size:8px;line-height:8px;color:#111;transform:scaleX(1.0085);">Your company’s current levels of capacity</div><div class="t" style="left:137.60px;top:430.03px;font-size:8px;line-height:8px;color:#111;">Current problems or anticipated issues due to lack of capacity</div><div class="t" style="left:137.60px;top:445.23px;font-size:8px;line-height:8px;color:#111;">Degree to which the service levels (SLAs) are being achieved</div><div class="t" style="left:93.00px;top:467.42px;font-size:12.5px;line-height:12.5px;color:#3862a0;transform:scaleX(1.0350);">1.1</div><div class="t" style="left:137.60px;top:467.42px;font-size:12.5px;line-height:12.5px;color:#3862a0;transform:scaleX(1.0674);">Purpose</div><div class="t" style="left:103.00px;top:490.63px;font-size:8px;line-height:8px;color:#1d447e;font-style:italic;transform:scaleX(1.1063);">Outline the purpose of this Capacity Plan, for example:</div><div class="t" style="left:103.00px;top:505.83px;font-size:8px;line-height:8px;color:#1d447e;font-style:italic;transform:scaleX(1.0979);">This Capacity Plan is an integral part of infrastructure and deployment planning. It supports</div><div class="t" style="left:103.00px;top:515.83px;font-size:8px;line-height:8px;color:#1d447e;font-style:italic;transform:scaleX(1.1085);">the goal of optimum, and cost effective provisioning of resources and services by aligning</div><div class="t" style="left:103.00px;top:525.83px;font-size:8px;line-height:8px;color:#1d447e;font-style:italic;transform:scaleX(1.0834);">them to business demands.</div><div class="t" style="left:103.00px;top:539.93px;font-size:8px;line-height:8px;color:#1d447e;font-style:italic;transform:scaleX(1.0936);">This document provides an estimate of the IT resources required to support the functionality</div><div class="t" style="left:103.00px;top:549.93px;font-size:8px;line-height:8px;color:#1d447e;font-style:italic;transform:scaleX(1.1044);">and performance requirements of the &lt;system&gt; at full operating capacity. This estimate is</div><div class="t" style="left:103.00px;top:559.93px;font-size:8px;line-height:8px;color:#1d447e;font-style:italic;transform:scaleX(1.0987);">derived using observations from the current production system and running load and/or stress</div><div class="t" style="left:103.00px;top:569.93px;font-size:8px;line-height:8px;color:#1d447e;font-style:italic;transform:scaleX(1.0831);">tests in a similar environment. This capacity plan also addresses the database server,</div><div class="t" style="left:103.00px;top:579.93px;font-size:8px;line-height:8px;color:#1d447e;font-style:italic;transform:scaleX(1.0920);">application server, web services server, reporting server and storage requirements.</div><div class="t" style="left:103.00px;top:594.03px;font-size:8px;line-height:8px;color:#1d447e;font-style:italic;transform:scaleX(1.0718);">This document is used to:</div><div class="t" style="left:132.50px;top:608.73px;font-size:8px;line-height:8px;color:#1d447e;font-style:italic;transform:scaleX(1.1175);">Help components perform as efficiently as possible and accommodate reasonable</div><div class="t" style="left:132.50px;top:618.73px;font-size:8px;line-height:8px;color:#1d447e;font-style:italic;transform:scaleX(1.1243);">growth</div><div class="t" style="left:132.50px;top:633.23px;font-size:8px;line-height:8px;color:#1d447e;font-style:italic;transform:scaleX(1.0960);">Describe the system capacity requirements for new systems and applications in</div><div class="t" style="left:132.50px;top:643.23px;font-size:8px;line-height:8px;color:#1d447e;font-style:italic;transform:scaleX(1.1462);">&lt;company name&gt;’s architecture at production cutover</div><div class="t" style="left:132.50px;top:657.23px;font-size:8px;line-height:8px;color:#1d447e;font-style:italic;transform:scaleX(1.1078);">Ensure that infrastructure components are capable of performing all required</div><div class="t" style="left:132.50px;top:667.23px;font-size:8px;line-height:8px;color:#1d447e;font-style:italic;transform:scaleX(1.0927);">functions</div><div class="t" style="left:132.50px;top:682.53px;font-size:8px;line-height:8px;color:#1d447e;font-style:italic;transform:scaleX(1.1019);">Identify and reduce inefficiencies associated with under-utilized resources</div><div class="t" style="left:132.50px;top:697.03px;font-size:8px;line-height:8px;color:#1d447e;font-style:italic;transform:scaleX(1.1116);">Provide a technical reference for team members working on &lt;Project Name&gt;</div><div class="t" style="left:132.50px;top:711.03px;font-size:8px;line-height:8px;color:#1d447e;font-style:italic;transform:scaleX(1.0915);">Provide satisfactory service levels in a cost-efficient manner</div><div class="t" style="left:337.00px;top:756.00px;font-size:6.5px;line-height:6.5px;color:#c2c2c2;transform:scaleX(0.9953);">Document Name: Capacity Plan Template</div><div class="t" style="left:91.50px;top:764.80px;font-size:6.5px;line-height:6.5px;color:#c2c2c2;transform:scaleX(0.9898);">Page 7 of 41</div><div class="t" style="left:351.00px;top:764.80px;font-size:6.5px;line-height:6.5px;color:#c2c2c2;">© Company 2016. All rights reserved</div><div class="t" style="left:1343.00px;top:756.00px;font-size:6.5px;line-height:6.5px;color:#c2c2c2;transform:scaleX(0.9953);">Document Name: Capacity Plan Template</div><div class="t" style="left:1097.50px;top:764.80px;font-size:6.5px;line-height:6.5px;color:#c2c2c2;transform:scaleX(0.9898);">Page 9 of 41</div><div class="t" style="left:1357.00px;top:764.80px;font-size:6.5px;line-height:6.5px;color:#c2c2c2;">© Company 2016. All rights reserved</div><div class="t" style="left:596.00px;top:229.02px;font-size:12.5px;line-height:12.5px;color:#3862a0;transform:scaleX(0.9775);">1.2</div><div class="t" style="left:640.60px;top:229.02px;font-size:12.5px;line-height:12.5px;color:#3862a0;transform:scaleX(1.1391);">Background</div><div class="t" style="left:606.20px;top:251.73px;font-size:8px;line-height:8px;color:#1d447e;font-style:italic;transform:scaleX(1.1127);">Briefly summarize the conditions that created the need for this capacity plan, for example,</div><div class="t" style="left:606.20px;top:261.73px;font-size:8px;line-height:8px;color:#1d447e;font-style:italic;transform:scaleX(1.0895);">the merging of several company divisions required that IT systems were standardized or other</div><div class="t" style="left:606.20px;top:271.73px;font-size:8px;line-height:8px;color:#1d447e;font-style:italic;transform:scaleX(1.1082);">decisions that triggered this plan into action.</div><div class="t" style="left:595.00px;top:285.65px;font-size:8.8px;line-height:8.8px;color:#000;">&lt;&lt;Start text here&gt;&gt;</div><div class="t" style="left:596.00px;top:310.22px;font-size:12.5px;line-height:12.5px;color:#3862a0;transform:scaleX(0.9775);">1.3</div><div class="t" style="left:640.60px;top:310.22px;font-size:12.5px;line-height:12.5px;color:#3862a0;transform:scaleX(1.1283);">Scope</div><div class="t" style="left:606.20px;top:333.73px;font-size:8px;line-height:8px;color:#1d447e;font-style:italic;transform:scaleX(1.1110);">Identify the IT services and equipment your company intends to add or replace within the</div><div class="t" style="left:606.20px;top:343.73px;font-size:8px;line-height:8px;color:#1d447e;font-style:italic;transform:scaleX(1.0990);">scope of this capacity plan to maintain or improve the IT services.</div><div class="t" style="left:595.00px;top:356.75px;font-size:8.8px;line-height:8.8px;color:#000;">For example:</div><div class="t" style="left:595.00px;top:375.25px;font-size:8.8px;line-height:8.8px;color:#000;transform:scaleX(1.0047);">This Capacity Plan addresses the following IT services:</div><div class="t" style="left:640.60px;top:393.53px;font-size:8px;line-height:8px;color:#111;">Bandwidth Requirements</div><div class="t" style="left:640.60px;top:408.53px;font-size:8px;line-height:8px;color:#111;">Desktop Client Machines</div><div class="t" style="left:640.60px;top:422.83px;font-size:8px;line-height:8px;color:#111;">Disk Capacity Requirements</div><div class="t" style="left:640.60px;top:437.63px;font-size:8px;line-height:8px;color:#111;">Memory Requirements</div><div class="t" style="left:640.60px;top:452.63px;font-size:8px;line-height:8px;color:#111;">Network Capacity</div><div class="t" style="left:640.60px;top:466.83px;font-size:8px;line-height:8px;color:#111;">Processing Capacity Requirements</div><div class="t" style="left:640.60px;top:481.43px;font-size:8px;line-height:8px;color:#111;">Production Environment Servers</div><div class="t" style="left:640.60px;top:495.63px;font-size:8px;line-height:8px;color:#111;">Server Capacity Requirements</div><div class="t" style="left:595.00px;top:510.75px;font-size:8.8px;line-height:8.8px;color:#000;">This Capacity Plan document is applicable to the following data centers:</div><div class="t" style="left:640.60px;top:530.63px;font-size:8px;line-height:8px;color:#111;">&lt;Data Center Name&gt;</div><div class="t" style="left:640.60px;top:544.53px;font-size:8px;line-height:8px;color:#111;">&lt;Data Center Name&gt;</div><div class="t" style="left:596.00px;top:567.22px;font-size:12.5px;line-height:12.5px;color:#3862a0;transform:scaleX(0.9775);">1.4</div><div class="t" style="left:640.60px;top:567.22px;font-size:12.5px;line-height:12.5px;color:#3862a0;transform:scaleX(1.1141);">System Identification</div><div class="t" style="left:606.20px;top:590.43px;font-size:8px;line-height:8px;color:#1d447e;font-style:italic;transform:scaleX(1.1029);">Provide a full identification of the system to which this document applies, including, as</div><div class="t" style="left:606.20px;top:600.43px;font-size:8px;line-height:8px;color:#1d447e;font-style:italic;transform:scaleX(1.1031);">applicable, identification number(s), title(s), abbreviation(s), version number(s), and release</div><div class="t" style="left:606.20px;top:610.43px;font-size:8px;line-height:8px;color:#1d447e;font-style:italic;transform:scaleX(1.0830);">number(s).</div><div class="t" style="left:600.50px;top:628.95px;font-size:8.8px;line-height:8.8px;color:#000;">Identification</div><div class="t" style="left:690.30px;top:628.95px;font-size:8.8px;line-height:8.8px;color:#000;">Details</div><div class="t" style="left:600.50px;top:652.05px;font-size:8.8px;line-height:8.8px;color:#000;">Name:</div><div class="t" style="left:690.30px;top:652.05px;font-size:8.8px;line-height:8.8px;color:#000;">&lt;Enter the project’s formal name or N/A&gt;</div><div class="t" style="left:876.00px;top:652.05px;font-size:8.8px;line-height:8.8px;color:#000;">Project #: &lt;###&gt;</div><div class="t" style="left:600.50px;top:675.05px;font-size:8.8px;line-height:8.8px;color:#000;">Project Sponsor:</div><div class="t" style="left:690.30px;top:675.05px;font-size:8.8px;line-height:8.8px;color:#000;">&lt;Identify the project sponsor&gt;</div><div class="t" style="left:876.00px;top:675.05px;font-size:8.8px;line-height:8.8px;color:#000;">Priority: H/M/L</div><div class="t" style="left:600.50px;top:697.05px;font-size:8.8px;line-height:8.8px;color:#000;">Requestor:</div><div class="t" style="left:690.30px;top:697.05px;font-size:8.8px;line-height:8.8px;color:#000;">&lt;Identify who requested this document to be developed&gt;</div><div class="t" style="left:600.50px;top:719.75px;font-size:8.8px;line-height:8.8px;color:#000;">Start Date:</div><div class="t" style="left:690.30px;top:719.75px;font-size:8.8px;line-height:8.8px;color:#000;">&lt;Enter the preferred start date (mm/dd/yyyy)&gt;</div><div class="t" style="left:595.00px;top:751.30px;font-size:6.5px;line-height:6.5px;color:#c2c2c2;transform:scaleX(0.9953);">Document Name: Capacity Plan Template</div><div class="t" style="left:595.00px;top:764.60px;font-size:6.5px;line-height:6.5px;color:#c2c2c2;transform:scaleX(0.9836);">© Company 2016. All rights reserved.</div><div class="t" style="left:923.00px;top:764.60px;font-size:6.5px;line-height:6.5px;color:#c2c2c2;transform:scaleX(0.9763);">Page 8 of 41</div><div class="t" style="left:1103.00px;top:231.35px;font-size:8.8px;line-height:8.8px;color:#000;">Cost Estimates</div><div class="t" style="left:1192.60px;top:231.35px;font-size:8.8px;line-height:8.8px;color:#000;">[Optional]</div><div class="t" style="left:1099.00px;top:262.22px;font-size:12.5px;line-height:12.5px;color:#3862a0;transform:scaleX(0.9775);">1.5</div><div class="t" style="left:1143.60px;top:262.22px;font-size:12.5px;line-height:12.5px;color:#3862a0;transform:scaleX(1.0979);">Methods Used</div><div class="t" style="left:1109.50px;top:284.63px;font-size:8px;line-height:8px;color:#1d447e;font-style:italic;transform:scaleX(1.1182);">Identify where, when, and how you obtained the information provided in this document, such</div><div class="t" style="left:1109.50px;top:294.63px;font-size:8px;line-height:8px;color:#1d447e;font-style:italic;transform:scaleX(1.0891);">as Service Level Agreements (SLAs), utilization reports, capacity modeling, and workload</div><div class="t" style="left:1109.50px;top:304.63px;font-size:8px;line-height:8px;color:#1d447e;font-style:italic;transform:scaleX(1.0667);">forecasts.</div><div class="t" style="left:1098.00px;top:319.25px;font-size:8.8px;line-height:8.8px;color:#000;">The following methods were used to obtain the information provided in this capacity plan:</div><div class="t" style="left:1103.20px;top:344.35px;font-size:8.8px;line-height:8.8px;color:#000;">Method</div><div class="t" style="left:1195.00px;top:344.35px;font-size:8.8px;line-height:8.8px;color:#000;">Description</div><div class="t" style="left:1103.20px;top:375.95px;font-size:8.8px;line-height:8.8px;color:#000;">Method 1</div><div class="t" style="left:1195.00px;top:370.15px;font-size:8.8px;line-height:8.8px;color:#000;">Describe how you obtained the information provided in this document,</div><div class="t" style="left:1195.00px;top:382.75px;font-size:8.8px;line-height:8.8px;color:#000;">for example, existing technical documents and SLAs.</div><div class="t" style="left:1103.20px;top:411.75px;font-size:8.8px;line-height:8.8px;color:#000;">Method 2</div><div class="t" style="left:1195.00px;top:406.25px;font-size:8.8px;line-height:8.8px;color:#000;">[Optional] Describe how you obtained other information provided in</div><div class="t" style="left:1195.00px;top:418.85px;font-size:8.8px;line-height:8.8px;color:#000;">this document, for example, interviews, sessions, workshops etc</div><div class="t" style="left:1099.00px;top:449.02px;font-size:12.5px;line-height:12.5px;color:#3862a0;transform:scaleX(0.9775);">1.6</div><div class="t" style="left:1143.60px;top:449.02px;font-size:12.5px;line-height:12.5px;color:#3862a0;transform:scaleX(1.0592);">Assumptions</div><div class="t" style="left:1109.60px;top:471.63px;font-size:8px;line-height:8px;color:#1d447e;font-style:italic;transform:scaleX(1.1071);">Identify any assumptions regarding the information provided in this document, especially</div><div class="t" style="left:1109.60px;top:481.63px;font-size:8px;line-height:8px;color:#1d447e;font-style:italic;transform:scaleX(1.1048);">conditions relating to business drivers for capacity and how your calculations were derived.</div><div class="t" style="left:1109.60px;top:491.63px;font-size:8px;line-height:8px;color:#1d447e;font-style:italic;transform:scaleX(1.1149);">You can also considering assumptions which are beyond the control of the project but may</div><div class="t" style="left:1109.60px;top:501.63px;font-size:8px;line-height:8px;color:#1d447e;font-style:italic;transform:scaleX(1.0517);">influence its success.</div><div class="t" style="left:1109.60px;top:516.93px;font-size:8px;line-height:8px;color:#1d447e;font-style:italic;transform:scaleX(1.1115);">Describe assumed factors (as opposed to known facts) that could affect the requirements,</div><div class="t" style="left:1109.60px;top:526.93px;font-size:8px;line-height:8px;color:#1d447e;font-style:italic;transform:scaleX(1.1250);">for example, third-party or commercial software, operating environment, company policy, or</div><div class="t" style="left:1109.60px;top:536.93px;font-size:8px;line-height:8px;color:#1d447e;font-style:italic;transform:scaleX(1.1080);">legislation. The project could be negatively affected if these assumptions are incorrect or</div><div class="t" style="left:1109.60px;top:546.93px;font-size:8px;line-height:8px;color:#1d447e;font-style:italic;transform:scaleX(1.1349);">change during the project lifecycle.</div><div class="t" style="left:1098.00px;top:560.05px;font-size:8.8px;line-height:8.8px;color:#000;">The information in this capacity plan is based on the following assumptions:</div><div class="t" style="left:1109.60px;top:577.73px;font-size:8px;line-height:8px;color:#1d447e;font-style:italic;transform:scaleX(1.0670);">&lt;Sample assumptions &amp; text&gt;</div><div class="t" style="left:1103.20px;top:597.35px;font-size:8.8px;line-height:8.8px;color:#000;">Description</div><div class="t" style="left:1195.80px;top:597.35px;font-size:8.8px;line-height:8.8px;color:#000;">Assumption</div><div class="t" style="left:1103.20px;top:620.05px;font-size:8.8px;line-height:8.8px;color:#000;">Server utilization</div><div class="t" style="left:1195.80px;top:620.05px;font-size:8.8px;line-height:8.8px;color:#000;">The system is performing within the SLA criteria.</div><div class="t" style="left:1103.20px;top:642.75px;font-size:8.8px;line-height:8.8px;color:#000;">Concurrent Users</div><div class="t" style="left:1195.80px;top:642.75px;font-size:8.8px;line-height:8.8px;color:#000;">1200 users use the system as of &lt;date&gt;.</div><div class="t" style="left:1103.20px;top:664.75px;font-size:8.8px;line-height:8.8px;color:#000;">Performance</div><div class="t" style="left:1103.20px;top:677.55px;font-size:8.8px;line-height:8.8px;color:#000;">Optimization</div><div class="t" style="left:1195.80px;top:664.75px;font-size:8.8px;line-height:8.8px;color:#000;">Performance improvements beyond those implemented in production</div><div class="t" style="left:1195.80px;top:677.55px;font-size:8.8px;line-height:8.8px;color:#000;">by &lt;date&gt; have not been considered.</div><div class="t" style="left:1103.20px;top:700.85px;font-size:8.8px;line-height:8.8px;color:#000;">Hardware</div><div class="t" style="left:1195.80px;top:700.85px;font-size:8.8px;line-height:8.8px;color:#000;">Potential improvements in hardware speed have not been</div><div class="t" style="left:1195.80px;top:713.75px;font-size:8.8px;line-height:8.8px;color:#000;">considered.</div>
</body></html>
